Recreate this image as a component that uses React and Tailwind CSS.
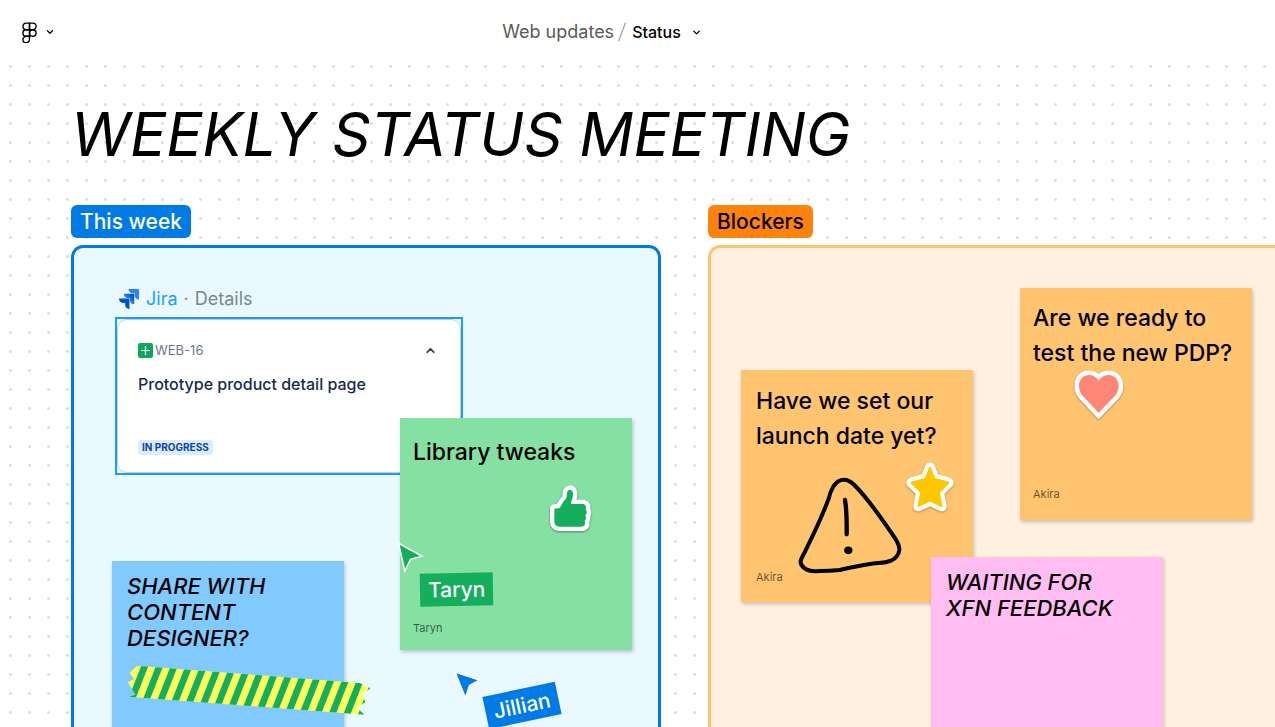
import React from "react";
import { ChevronDown, ChevronUp } from "lucide-react";

function FigmaLogo() {
  return (
    <svg width="15" height="21" viewBox="4 1 16 22" fill="none" stroke="#000" strokeWidth="1.5" strokeLinejoin="round" aria-hidden="true">
      <path d="M5 5.5A3.5 3.5 0 0 1 8.5 2H12v7H8.5A3.5 3.5 0 0 1 5 5.5z" />
      <path d="M12 2h3.5a3.5 3.5 0 1 1 0 7H12z" />
      <path d="M12 12.5a3.5 3.5 0 1 1 7 0 3.5 3.5 0 1 1-7 0z" />
      <path d="M5 19.5A3.5 3.5 0 0 1 8.5 16H12v3.5a3.5 3.5 0 1 1-7 0z" />
      <path d="M5 12.5A3.5 3.5 0 0 1 8.5 9H12v7H8.5A3.5 3.5 0 0 1 5 12.5z" />
    </svg>
  );
}

function JiraLogo() {
  return (
    <svg width="20" height="20" viewBox="0 0 24 24" aria-hidden="true">
      <defs>
        <linearGradient id="jiraMid" x1="1" y1="0" x2="0.4" y2="0.6">
          <stop offset="0.2" stopColor="#0052cc" />
          <stop offset="1" stopColor="#2684ff" />
        </linearGradient>
      </defs>
      <path fill="#2684ff" d="M23.013 0H11.455a5.215 5.215 0 0 0 5.215 5.215h2.129v2.057A5.215 5.215 0 0 0 24 12.483V1.005A1.001 1.001 0 0 0 23.013 0Z" />
      <path fill="url(#jiraMid)" d="M17.294 5.757H5.736a5.215 5.215 0 0 0 5.215 5.214h2.129v2.058a5.218 5.218 0 0 0 5.215 5.214V6.758a1.001 1.001 0 0 0-1.001-1.001z" />
      <path fill="#0052cc" d="M11.571 11.513H0a5.218 5.218 0 0 0 5.232 5.215h2.13v2.057A5.215 5.215 0 0 0 12.575 24V12.518a1.005 1.005 0 0 0-1.005-1.005z" />
    </svg>
  );
}

function ThumbSticker() {
  return (
    <svg className="drop-shadow-[0_1px_1px_rgba(0,0,0,0.4)]" width="45" height="49" viewBox="505 253 135 147" role="img" aria-label="Thumbs up">
      <path
        d="M524 327 L537 326 Q541 325 544 318 Q549 307 558 298 Q562 293 562 280 Q563 271 570 270 Q578 270 580 280 Q581 293 574 308 Q572 313 576 313 L612 313 Q621 316 619 327 Q617 330 620 333 Q624 341 617 347 Q622 358 615 364 Q619 376 611 380 Q608 381 604 381 L540 381 Q525 380 524 366 Z"
        fill="#14ae5c" stroke="#fff" strokeWidth="26" strokeLinejoin="round" paintOrder="stroke"
      />
    </svg>
  );
}

function StarSticker() {
  const points = "600,323 613,357 656,369 627,398 635,440 600,423 565,440 573,398 544,369 587,357";
  return (
    <svg className="drop-shadow-[0_1px_1px_rgba(0,0,0,0.3)]" width="50" height="52" viewBox="525 304 150 156" role="img" aria-label="Star">
      <polygon points={points} fill="#fff" stroke="#fff" strokeWidth="30" strokeLinejoin="round" />
      <polygon points={points} fill="#ffc700" stroke="#ffc700" strokeWidth="5" strokeLinejoin="round" />
    </svg>
  );
}

function HeartSticker() {
  return (
    <svg className="drop-shadow-[0_1px_1px_rgba(0,0,0,0.3)]" width="52" height="52" viewBox="338 386 156 156" role="img" aria-label="Heart">
      <path
        d="M415 517 L367 466 Q356 454 356 437 C356 415 371 404 386 404 Q405 404 415 421 Q426 404 445 404 C460 404 475 415 475 437 Q475 454 464 466 Z"
        fill="#ff8577" stroke="#fff" strokeWidth="27" strokeLinejoin="miter" paintOrder="stroke"
      />
    </svg>
  );
}

function WarningDrawing() {
  return (
    <svg width="106" height="100" viewBox="202 347 318 300" fill="none" stroke="#000" strokeLinecap="round" strokeLinejoin="round" role="img" aria-label="Warning">
      <path strokeWidth="12" d="M312 377 Q325 358 343 358 Q358 358 374 374 C412 411 451 467 495 532 Q510 555 509 569 Q506 590 486 600 Q470 607 446 608 Q410 611 330 629 Q300 632 268 632 Q240 635 225 624 Q212 615 213 602 Q214 595 226 574 C250 525 275 475 297 415 Q302 393 312 377 Z" />
      <path strokeWidth="13" d="M346 419 Q352 455 351 522" />
      <ellipse cx="356" cy="570" rx="8" ry="7" fill="#000" strokeWidth="9" />
    </svg>
  );
}

const STRIPES = Array.from({ length: 17 }, (_, i) => 254 + i * 42.9);

function WashiTape() {
  return (
    <svg width="246" height="52" viewBox="198 372 738 156" role="img" aria-label="Washi tape">
      <defs>
        <clipPath id="tape">
          <polygon points="232,377 899,429 932,445 906,462 916,487 890,503 914,524 205,470 226,464 204,427 222,417 209,398" />
        </clipPath>
      </defs>
      <g clipPath="url(#tape)">
        <rect x="190" y="370" width="760" height="160" fill="#ffff5c" />
        {STRIPES.map((x, i) => {
          const y = 377 + (x - 232) * 0.078;
          return <line key={i} x1={x + 4} y1={y - 10} x2={x - 40} y2={y + 102} stroke="#14ae5c" strokeWidth="20" />;
        })}
      </g>
    </svg>
  );
}

function Cursor({ points, color, viewBox }) {
  return (
    <svg width="30" height="34" viewBox={viewBox} aria-hidden="true">
      <polygon points={points} fill={color} stroke="#fff" strokeWidth="9" paintOrder="stroke" />
    </svg>
  );
}

function Note({ className, hand, author, children }) {
  return (
    <article className={"absolute flex size-[232px] flex-col justify-between shadow-[1px_2px_4px_rgba(0,0,0,0.22)] " + className}>
      <p className={hand ? "text-[22px] leading-[26px] font-medium italic" : "text-[23px] leading-[35px] font-[450]"}>{children}</p>
      {author && <p className="text-[11px] leading-4 text-black/60">{author}</p>}
    </article>
  );
}

function Section({ title, labelClass, frameClass, className, children }) {
  return (
    <section className={"flex flex-col items-start gap-[7px] " + className}>
      <h2 className={"rounded-md px-[9px] text-[21px] leading-[33px] font-[450] " + labelClass}>{title}</h2>
      <div className={"relative w-full flex-1 rounded-xl border-3 " + frameClass}>{children}</div>
    </section>
  );
}

function JiraWidget() {
  return (
    <div className="absolute top-[39px] left-[41px] w-[348px]">
      <div className="mb-[6px] flex h-6 items-center gap-[7px] pl-1 text-lg">
        <JiraLogo />
        <div className="flex gap-[6px] text-[#7a868d]">
          <a href="#jira" className="text-[#1a9fff]">Jira</a>
          <span>·</span>
          <span>Details</span>
        </div>
      </div>
      <div className="h-[158px] border-2 border-[#189dff]">
        <div className="flex h-full flex-col items-start rounded-[10px] border border-[#c9ced4] bg-white pt-[23px] pr-[23px] pl-5">
          <div className="flex h-[15px] w-full items-center gap-[2px]">
            <svg width="15" height="15" viewBox="0 0 15 15" aria-hidden="true">
              <rect width="15" height="15" rx="2" fill="#0caa58" />
              <path d="M3 7.5h9M7.5 3v9" stroke="#fff" strokeWidth="1.2" />
            </svg>
            <span className="text-[13px] text-[#6b778c]">WEB-16</span>
            <button type="button" aria-label="Collapse" className="ml-auto text-[#344563]">
              <ChevronUp size={13} strokeWidth={3.5} />
            </button>
          </div>
          <h3 className="mt-[14px] text-base leading-6 font-medium text-[#172b4d]">Prototype product detail page</h3>
          <span className="mt-[44px] rounded-[3px] bg-[#deebff] px-1 text-[10px] leading-[15px] font-bold text-[#0747a6]">IN PROGRESS</span>
        </div>
      </div>
    </div>
  );
}

export default function App() {
  return (
    <div className="flex h-screen flex-col overflow-hidden bg-white font-['Inter',sans-serif] text-black">
      <header className="flex h-16 shrink-0 items-center px-[22px]">
        <button type="button" aria-label="Main menu" className="flex items-center gap-2">
          <FigmaLogo />
          <ChevronDown size={10} strokeWidth={3} />
        </button>
        <nav aria-label="Breadcrumb" className="flex flex-1 items-center justify-center gap-1 pr-[104px]">
          <a href="#web-updates" className="text-lg text-[#5a5a5a]">Web updates</a>
          <svg width="8" height="20" viewBox="0 0 8 20" stroke="#a3a3a3" strokeWidth="1.2" aria-hidden="true">
            <path d="M7.5 0.5L0.5 19.5" />
          </svg>
          <button type="button" className="flex items-center gap-[10px] pl-[2px] text-base font-[450]">
            Status
            <ChevronDown size={11} strokeWidth={3} />
          </button>
        </nav>
      </header>
      <main className="flex min-h-0 flex-1 flex-col bg-[radial-gradient(circle,#dedede_1px,transparent_2px)] bg-[size:19px_19px] bg-[position:1px_-7px] pt-[34px] pl-[71px]">
        <h1 className="mb-[35px] text-[60px] leading-[72px] italic">WEEKLY STATUS MEETING</h1>
        <div className="-mb-4 flex flex-1 gap-[47px]">
          <Section title="This week" className="w-[590px] shrink-0" labelClass="bg-[#007be5] text-white" frameClass="border-[#007be5] bg-[#e9f9ff]">
            <JiraWidget />
            <Note className="top-[170px] left-[326px] bg-[#85e0a3] px-[13px] pt-[17px] pb-[14px]" author="Taryn">Library tweaks</Note>
            <div className="absolute top-[236px] left-[474px]"><ThumbSticker /></div>
            <div className="absolute top-[292px] left-[322px]">
              <Cursor color="#14ae5c" points="57,432 118,466 88,474 73,504" viewBox="46 418 90 102" />
            </div>
            <div className="absolute top-[325px] left-[346px] -rotate-1 bg-[#14ae5c] px-2 text-[21px] leading-[33px] font-[450] text-white">Taryn</div>
            <Note hand className="top-[313px] left-[38px] bg-[#80caff] px-[15px] pt-3 pb-4">
              SHARE WITH<br />CONTENT<br />DESIGNER?
            </Note>
            <div className="absolute top-[416px] left-[52px]"><WashiTape /></div>
            <div className="absolute top-[422px] left-[379px]">
              <Cursor color="#007be5" points="230,817 294,838 268,852 257,884" viewBox="220 807 90 102" />
            </div>
            <div className="absolute top-[441px] left-[411px] -rotate-12 bg-[#007be5] px-2 text-[21px] leading-[33px] font-[450] text-white">Jillian</div>
          </Section>
          <Section title="Blockers" className="-mr-4 flex-1" labelClass="bg-[#ff820d]" frameClass="border-[#ffc470] bg-[#fff0df]">
            <Note className="top-[122px] left-[30px] bg-[#ffc470] px-[15px] pt-[14px] pb-[17px]" author="Akira">
              Have we set our<br />launch date yet?
            </Note>
            <div className="absolute top-[228px] left-[86px]"><WarningDrawing /></div>
            <div className="absolute top-[213px] left-[194px]"><StarSticker /></div>
            <Note className="top-[40px] left-[309px] bg-[#ffc470] px-[13px] pt-[13px] pb-[18px]" author="Akira">
              Are we ready to<br />test the new PDP?
            </Note>
            <div className="absolute top-[121px] left-[362px]"><HeartSticker /></div>
            <Note hand className="top-[309px] left-[220px] bg-[#ffbdf2] px-[15px] pt-3 pb-4">
              WAITING FOR<br />XFN FEEDBACK
            </Note>
          </Section>
        </div>
      </main>
    </div>
  );
}
